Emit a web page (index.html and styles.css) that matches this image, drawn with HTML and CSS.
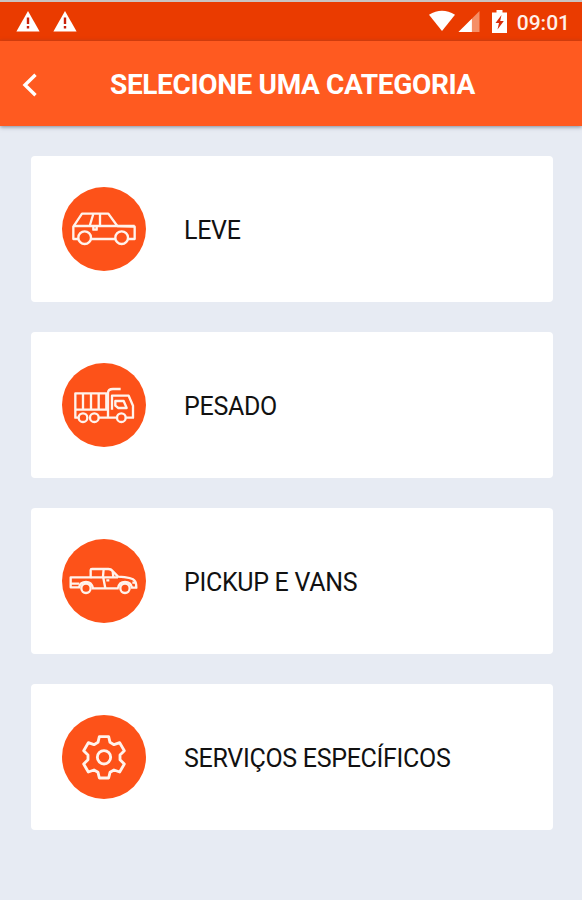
FILE: index.html
```html
<!DOCTYPE html>
<html lang="pt-BR">
<head>
  <meta charset="UTF-8" />
  <meta name="viewport" content="width=device-width, initial-scale=1.0" />
  <title>Selecione uma categoria</title>
  <link rel="stylesheet" href="styles.css">
</head>
<body>
  <!-- Status bar -->
  <div class="status-bar">
    <div class="status-left">
      <svg class="warning" viewBox="0 0 24 22">
        <path d="M12 1 L23.6 21.5 H0.4 Z" fill="#fff" />
        <path d="M12 7.5 V14 M12 16 V18.5" stroke="#c8200a" stroke-width="2.4" />
      </svg>
      <svg class="warning" viewBox="0 0 24 22">
        <path d="M12 1 L23.6 21.5 H0.4 Z" fill="#fff" />
        <path d="M12 7.5 V14 M12 16 V18.5" stroke="#c8200a" stroke-width="2.4" />
      </svg>
    </div>
    <div class="status-right">
      <svg class="wifi" viewBox="0 0 27 22">
        <path d="M0 4.5 Q13.5 -4 27 4.5 L13.5 21.5 Z" fill="#fff" />
      </svg>
      <svg class="signal" viewBox="0 0 22 22">
        <path d="M22 0 V22 H0 Z" fill="#f58e66" />
        <path d="M14 8 V22 H0 Z" fill="#fff" />
      </svg>
      <svg class="battery" viewBox="0 0 15 23">
        <path d="M4.5 0 H10.5 V2.5 H15 V23 H0 V2.5 H4.5 Z" fill="#fff" />
        <path d="M9.5 5 L3.5 13 H7 L5.5 19.5 L11.8 11 H8.2 Z" fill="#d92b08" />
      </svg>
      <span class="clock">09:01</span>
    </div>
  </div>

  <!-- Header -->
  <header class="header">
    <svg class="back" viewBox="0 0 16 24">
      <path d="M13.5 1.8 L3 12 L13.5 22.2" fill="none" stroke="#fff" stroke-width="3.4" />
    </svg>
    <h1 class="title">SELECIONE UMA CATEGORIA</h1>
  </header>

  <!-- Categories -->
  <main class="categories">
    <div class="card">
      <svg class="icon" viewBox="24 20 252 252">
        <circle class="disc" cx="150" cy="146" r="126" />
        <path d="M74 176 H58 V139 L84 100 H163 L190 137 L242 139 V176 H222 M111 176 H184" />
        <path d="M58 137 H242 M118 101 L107 137 M138 100 V137 M118 138 V148 H128 V138" />
        <circle cx="92" cy="172" r="19" />
        <circle cx="203" cy="172" r="19" />
      </svg>
      <span class="label">LEVE</span>
    </div>
    <div class="card">
      <svg class="icon" viewBox="24 20 252 252">
        <circle class="disc" cx="150" cy="146" r="126" />
        <path d="M74 184 H64 V111 H157 V160 M64 160 H165 M87 111 V160 M111 111 V160 M134 111 V160" />
        <path d="M200 98 H177 Q162 98 162 110 V184 H187 M134 184 H166 M174 160 V118 H224 L237 148 V184 H216" />
        <path d="M184 134 H209 L218 155 H193 L184 148 Z" />
        <circle cx="87" cy="184" r="13" />
        <circle cx="121" cy="184" r="13" />
        <circle cx="202" cy="184" r="13" />
      </svg>
      <span class="label">PESADO</span>
    </div>
    <div class="card">
      <svg class="icon" viewBox="24 20 252 252">
        <circle class="disc" cx="150" cy="146" r="126" />
        <path d="M79 165 H50 V135 H110 V113 Q110 110 114 110 H163 Q171 110 176 116 L192 133 Q235 135 242 145 Q247 151 247 166 H231" />
        <path d="M114 168 H194 M149 110 L147 132 L154 168 M110 135 H192 M50 154 H76 M176 116 L178 135 M157 144 H166" />
        <path d="M75 165 Q79 149 96 149 Q113 149 117 168 M192 168 Q195 149 213 149 Q231 149 234 166 M235 151 H245" />
        <circle cx="96" cy="168" r="14" />
        <circle cx="213" cy="168" r="14" />
      </svg>
      <span class="label">PICKUP E VANS</span>
    </div>
    <div class="card">
      <svg class="icon gear" viewBox="24 20 252 252">
        <circle class="disc" cx="150" cy="146" r="126" />
        <path d="M136 85 H164 L168 102 L180 109 L197 103 L211 127 L198 140 V154 L211 167 L197 191 L180 185 L168 192 L164 209 H136 L132 192 L120 185 L103 191 L89 167 L102 154 V140 L89 127 L103 103 L120 109 L132 102 Z" />
        <circle cx="150" cy="147" r="20" />
      </svg>
      <span class="label">SERVIÇOS ESPECÍFICOS</span>
    </div>
  </main>
</body>
</html>
```

FILE: styles.css
```css
* {
  margin: 0;
  padding: 0;
  box-sizing: border-box;
}

body {
  min-height: 100vh;
  background: #e7ebf3;
  font-family: Roboto, "Liberation Sans", sans-serif;
  overflow: hidden;
}

svg {
  display: block;
  flex: none;
}

/* Status bar */
.status-bar {
  display: flex;
  justify-content: space-between;
  height: 41px;
  padding: 0 12px 0 16px;
  background: #ea3b00;
  border-top: 2px solid #c9c4c1;
}

.status-left,
.status-right {
  display: flex;
  align-items: flex-start;
}

.status-left {
  gap: 13px;
  padding-top: 8px;
}

.status-right {
  padding-top: 8px;
}

.warning {
  width: 24px;
  height: 22px;
}

.wifi {
  width: 26px;
  height: 22px;
  margin-right: 3px;
}

.signal {
  width: 22px;
  height: 21px;
  margin: 1px 12px 0 0;
}

.battery {
  width: 15px;
  height: 23px;
  margin-right: 10px;
}

.clock {
  color: #fff0ea;
  font-size: 21px;
  font-weight: 500;
  line-height: 26px;
}

/* Header */
.header {
  display: flex;
  align-items: center;
  height: 85px;
  padding: 2px 0 0 22px;
  background: #ff5a20;
  box-shadow: 0 1px 4px rgba(60, 70, 90, 0.6);
}

.back {
  width: 16px;
  height: 24px;
}

.title {
  margin-left: 72px;
  color: #fff;
  font-size: 28px;
  font-weight: 700;
  line-height: 36px;
  letter-spacing: -0.36px;
  white-space: nowrap;
}

/* Category cards */
.categories {
  display: grid;
  gap: 30.3px;
  padding: 29.5px 29px 0 31px;
}

.card {
  display: flex;
  align-items: center;
  height: 146px;
  padding-left: 31px;
  background: #fff;
  border-radius: 4px;
}

.icon {
  width: 84px;
  height: 84px;
  fill: none;
  stroke: #fff3ec;
  stroke-width: 7;
  stroke-linejoin: round;
}

.gear {
  stroke-width: 8.5;
}

.disc {
  fill: #fd5219;
  stroke: none;
}

.label {
  margin-left: 38px;
  padding-top: 4px;
  color: #111;
  font-size: 25px;
  line-height: 30px;
  letter-spacing: -0.3px;
  white-space: nowrap;
}
```
